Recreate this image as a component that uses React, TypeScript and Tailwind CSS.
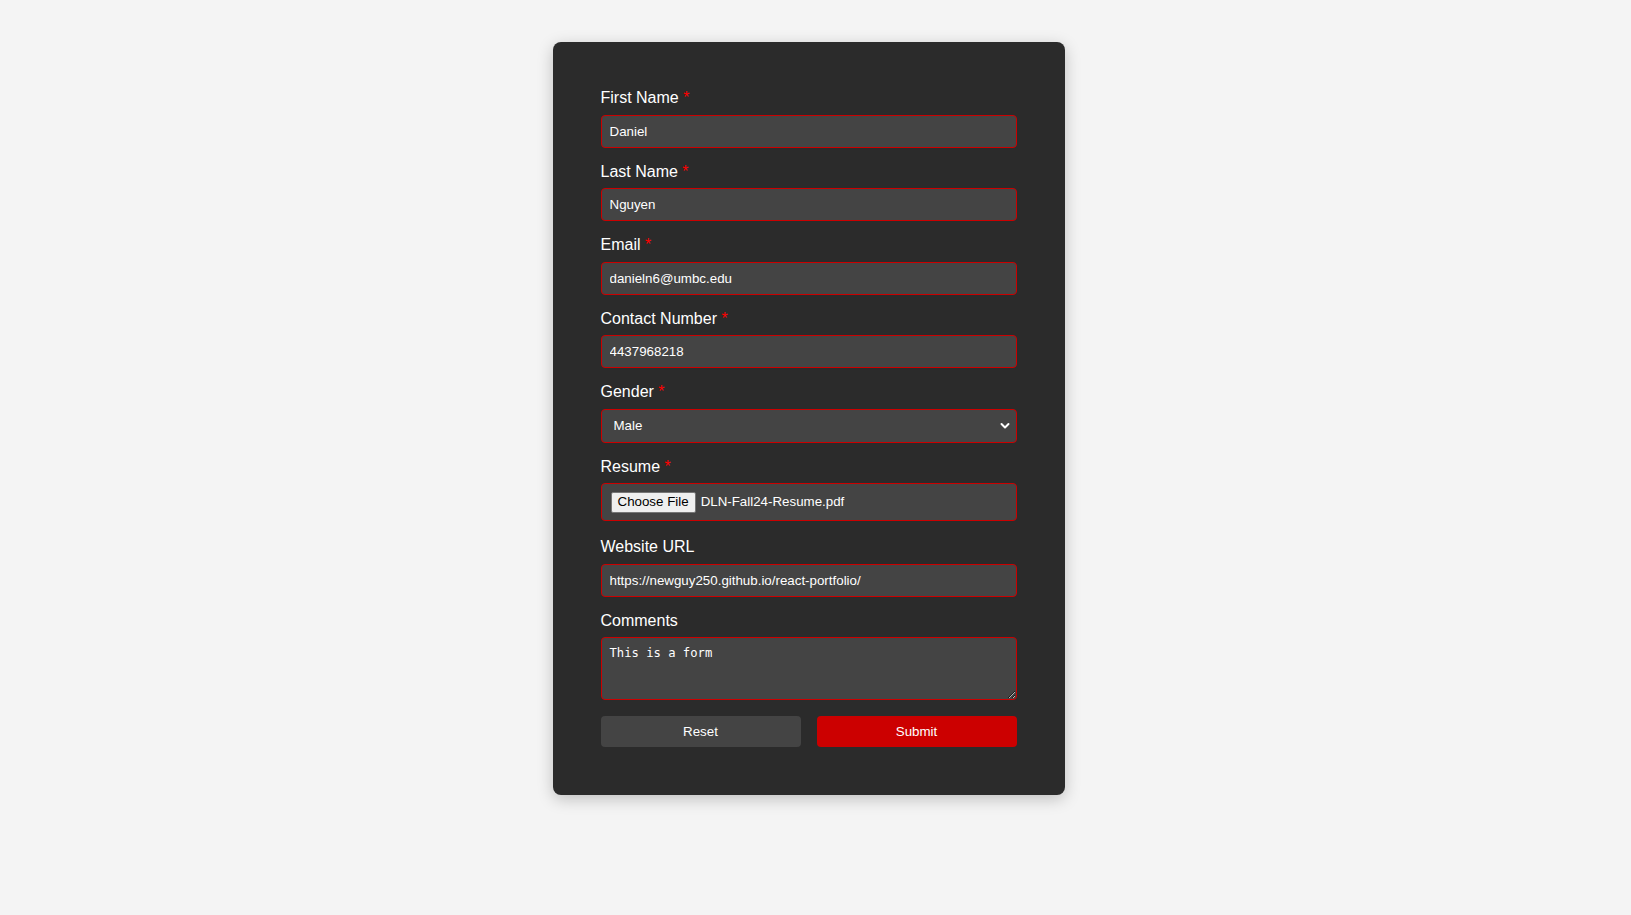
import React from 'react';

const font = { fontFamily: '"Liberation Sans", Arial, sans-serif' };

const Label = ({ text, required }: { text: string; required?: boolean }) => (
  <label className="block text-[16px] leading-[18px] mb-[7.5px] text-white">
    {text}
    {required && <span className="text-[#ff0000]"> *</span>}
  </label>
);

const inputCls =
  'block w-full h-[33px] px-[8px] bg-[#444444] border border-[#cc0000] rounded-[4px] text-white text-[13.33px] outline-none';

const App = () => {
  // text fields in form order
  const fields = [
    { label: 'First Name', value: 'Daniel', required: true },
    { label: 'Last Name', value: 'Nguyen', required: true },
    { label: 'Email', value: 'danieln6@umbc.edu', required: true },
    { label: 'Contact Number', value: '4437968218', required: true },
  ];

  return (
    <div className="min-h-[915px] bg-[#f4f4f4] flex justify-center pr-[14px] pt-[42px]" style={font}>
      <div className="w-[512px] h-[753px] bg-[#2b2b2b] rounded-[8px] shadow-[0_4px_16px_rgba(0,0,0,0.22)] px-[48px] pt-[47px] pb-[46px]">
        <form className="flex flex-col gap-[15px]" onSubmit={(e) => e.preventDefault()}>
          {fields.map((f) => (
            <div key={f.label}>
              <Label text={f.label} required={f.required} />
              <input className={inputCls} defaultValue={f.value} style={font} />
            </div>
          ))}

          {/* Gender */}
          <div>
            <Label text="Gender" required />
            <div className="relative">
              <select
                className="block w-full h-[34px] pl-[12px] pr-[28px] bg-[#444444] border border-[#cc0000] rounded-[4px] text-white text-[13.33px] outline-none appearance-none"
                style={font}
                defaultValue="Male"
              >
                <option>Male</option>
                <option>Female</option>
                <option>Other</option>
              </select>
              <svg
                className="absolute right-[7px] top-[13px] pointer-events-none"
                width="10"
                height="8"
                viewBox="0 0 10 8"
                fill="none"
              >
                <path d="M1.5 2L5 5.5L8.5 2" stroke="white" strokeWidth="2" strokeLinecap="round" strokeLinejoin="round" />
              </svg>
            </div>
          </div>

          {/* Resume */}
          <div className="mb-[2px]">
            <Label text="Resume" required />
            <div className="flex items-center h-[38px] px-[9px] bg-[#444444] border border-[#cc0000] rounded-[4px] text-white text-[13.33px]">
              <span className="h-[21px] px-[6px] flex items-center bg-[#efefef] border border-[#767676] rounded-[2px] text-black">
                Choose File
              </span>
              <span className="ml-[5px]">DLN-Fall24-Resume.pdf</span>
            </div>
          </div>

          {/* Website URL */}
          <div>
            <Label text="Website URL" />
            <input className={inputCls} defaultValue="https://newguy250.github.io/react-portfolio/" style={font} />
          </div>

          {/* Comments */}
          <div>
            <Label text="Comments" />
            <textarea
              className="block w-full h-[63px] px-[8px] py-[8px] bg-[#444444] border border-[#cc0000] rounded-[4px] text-white text-[12.2px] leading-[15px] outline-none"
              style={{ fontFamily: '"DejaVu Sans Mono", monospace' }}
              defaultValue="This is a form"
            />
          </div>

          <div className="flex gap-[16px] mt-[1px]">
            <button type="reset" className="flex-1 h-[31px] bg-[#444444] rounded-[4px] text-white text-[13.33px]">
              Reset
            </button>
            <button type="submit" className="flex-1 h-[31px] bg-[#cc0000] rounded-[4px] text-white text-[13.33px]">
              Submit
            </button>
          </div>
        </form>
      </div>
    </div>
  );
};

export default App;
